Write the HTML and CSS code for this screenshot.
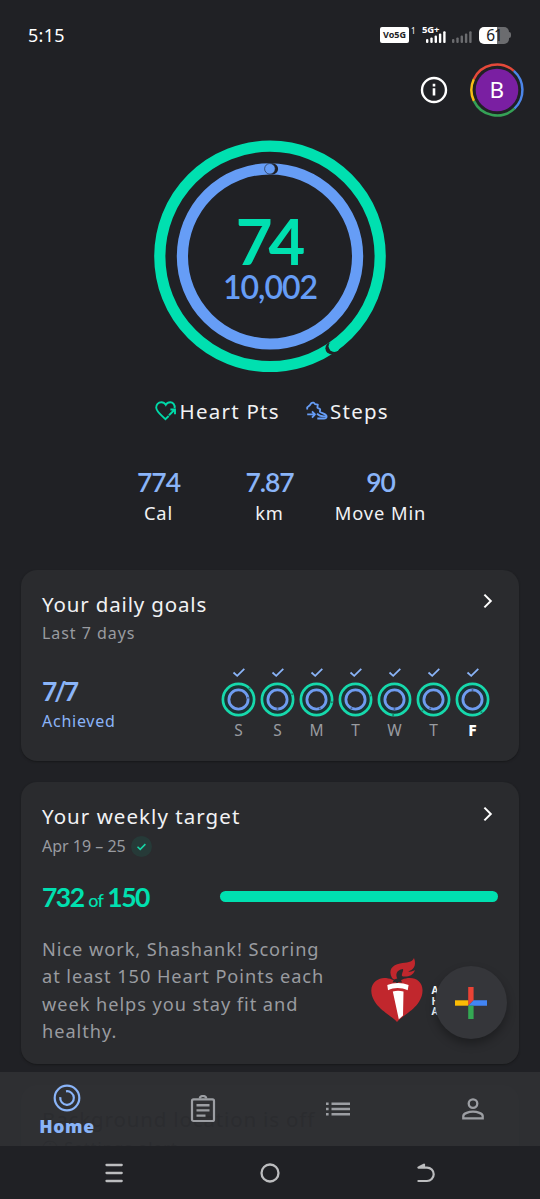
FILE: index.html
```html
<!DOCTYPE html>
<html lang="en">
<head>
<meta charset="utf-8">
<title>Fit</title>
<link rel="stylesheet" href="styles.css">
</head>
<body>
<div class="screen">
  <header class="status">
    <span class="clock">5:15</span>
    <div class="status-icons">
      <span class="volte">Vo5G</span><span class="sim">1</span>
      <div class="net"><span class="net-label">5G+</span>
        <svg width="20" height="12" viewBox="0 0 20 12" fill="#fff"><rect x="0" y="8" width="2.4" height="4" rx="1"/><rect x="4.3" y="6.5" width="2.4" height="5.5" rx="1"/><rect x="8.6" y="4.5" width="2.4" height="7.5" rx="1"/><rect x="12.9" y="2.5" width="2.4" height="9.5" rx="1"/><rect x="17.2" y="0.3" width="2.4" height="11.7" rx="1"/></svg>
      </div>
      <svg class="sig2" width="20" height="12" viewBox="0 0 20 12" fill="#6b6c6f"><rect x="0" y="8" width="2.4" height="4" rx="1"/><rect x="4.3" y="6.5" width="2.4" height="5.5" rx="1"/><rect x="8.6" y="4.5" width="2.4" height="7.5" rx="1"/><rect x="12.9" y="2.5" width="2.4" height="9.5" rx="1"/><rect x="17.2" y="0.3" width="2.4" height="11.7" rx="1"/></svg>
      <div class="battery"><span>61</span></div><i class="battery-tip"></i>
    </div>
  </header>

  <div class="topbar">
    <svg width="28" height="28" viewBox="0 0 28 28"><circle cx="14" cy="14" r="12" fill="none" stroke="#fff" stroke-width="2.4"/><path d="M14 12.3v7.2M14 7.8v2.6" stroke="#fff" stroke-width="2.6"/></svg>
    <svg class="avatar" width="54" height="54" viewBox="0 0 54 54">
      <g fill="none" stroke-width="2.5">
        <path d="M3.8 16.2A25.5 25.5 0 0 1 43.8 7.9" stroke="#e5493a"/>
        <path d="M43.8 7.9A25.5 25.5 0 0 1 44.4 45.6" stroke="#4c86ea"/>
        <path d="M44.4 45.6A25.5 25.5 0 0 1 3.9 37.9" stroke="#35a156"/>
        <path d="M3.9 37.9A25.5 25.5 0 0 1 3.8 16.2" stroke="#f9bc15"/>
      </g>
      <circle cx="27" cy="27" r="21.3" fill="#7a1fa2"/>
      <text x="26.7" y="35" text-anchor="middle" class="initial">B</text>
    </svg>
  </div>

  <section class="dial">
    <svg class="dial-rings" width="232" height="232" viewBox="0 0 232 232">
      <circle cx="116" cy="116.4" r="110.2" fill="none" stroke="#00e0b0" stroke-width="11.2"/>
      <circle cx="177.5" cy="208.3" r="6.1" fill="#202125"/>
      <circle cx="180.3" cy="206.3" r="5.7" fill="#00e0b0"/>
      <circle cx="116" cy="116.4" r="87.6" fill="none" stroke="#669df6" stroke-width="11.2"/>
      <circle cx="118.5" cy="28.9" r="5.6" fill="#202125"/>
      <circle cx="115.9" cy="28.8" r="5.3" fill="#669df6" stroke="#202125" stroke-width=".6"/>
    </svg>
    <div class="dial-text"><span class="points">74</span><span class="steps">10,002</span></div>
  </section>

  <div class="legend">
    <svg width="22" height="20" viewBox="0 0 22 20" fill="none" stroke="#00d9a8" stroke-width="1.9"><path d="M19.6 7.2C20.2 3.7 17.8 1.2 15.3 1.2C13.3 1.2 11.7 2.2 10.8 3.8C9.8 2.2 8.3 1.2 6.3 1.2C3.3 1.2 1 3.6 1.2 6.7C1.5 10.7 5.6 13.4 10.4 18.2L13.7 15"/><path d="M14 14.2L19.6 8.8M15.4 8.5H20V13.3"/></svg>
    <span class="legend-heart">Heart Pts</span>
    <svg width="22" height="20" viewBox="0 0 22 20" fill="none" stroke="#669df6" stroke-width="1.8" stroke-linejoin="round"><path d="M1.2 8.4V6.4L3.8 4.3L5.2 2.2C6.7 1 8.3 1.8 9 3.2L11.8 3.6L11.4 6.6L14.2 8.2L13.9 10.8C16.3 12.6 20.5 12.8 20.6 15.3C20.7 16.8 19.5 17.5 18 17.5H11.3"/><path d="M1.2 13.4H8.6M6 10.4L9 13.4L6 16.6M11 12.7C13 14.8 16 15.7 20 15.1"/></svg>
    <span class="legend-steps">Steps</span>
  </div>

  <div class="stats">
    <div class="stat"><b>774</b><span>Cal</span></div>
    <div class="stat"><b>7.87</b><span>km</span></div>
    <div class="stat"><b>90</b><span>Move Min</span></div>
  </div>

  <section class="card goals">
    <div class="card-head"><h2>Your daily goals</h2><svg width="10" height="16" viewBox="0 0 10 16"><path d="M1.4 1.6L7.8 8L1.4 14.4" fill="none" stroke="#fff" stroke-width="2"/></svg></div>
    <p class="sub">Last 7 days</p>
    <div class="goals-row">
      <div class="achieved"><b>7/7</b><span>Achieved</span></div>
      <div class="days" id="days"></div>
    </div>
  </section>

  <section class="card weekly">
    <div class="card-head"><h2 class="wide">Your weekly target</h2><svg width="10" height="16" viewBox="0 0 10 16"><path d="M1.4 1.6L7.8 8L1.4 14.4" fill="none" stroke="#fff" stroke-width="2"/></svg></div>
    <p class="sub range">Apr 19 – 25 <svg width="21" height="21" viewBox="0 0 21 21"><circle cx="10.5" cy="10.5" r="10.5" fill="#263a38"/><path d="M6.5 10.8L9.2 13.4L14.4 8.1" fill="none" stroke="#17d6a6" stroke-width="1.5"/></svg></p>
    <div class="target-row"><div class="target"><b>732</b><span>of</span><b>150</b></div><div class="bar"></div></div>
    <div class="note">
      <p>Nice work, Shashank! Scoring<br>at least 150 Heart Points each<br>week helps you stay fit and<br>healthy.</p>
      <svg width="52" height="66" viewBox="0 0 52 66"><path d="M26 64C20 57 1 49 .3 33C0 24 8 20 13 20C19 20 24 22 26 26C29 22 33 20 39 20C46 20 52 25 51.5 33C51 49 32 57 26 64Z" fill="#c1272d"/><path d="M21 20C17 12 21 7 29 5.5C36 4 41 5 43 0C46 8 42 12 37 13.5C40 14 43 13 44 12C42 18 37 19 32 18.5C29 18 33 13 32 11C25 12 24 17 27 22C25 22 23 22 21 20Z" fill="#c1272d"/><path d="M16.3 27C23 24.3 31 24.3 37.6 27L36.7 32.3C30 29.3 23 29.3 17 32.3ZM21.8 33.5Q27 32 32.5 33.5L32 57.5L27.8 61.3Z" fill="#fff"/><path d="M21.5 24.5Q23 20.5 27 20.5Q30 20.5 31 24.5Q26 23.5 21.5 24.5Z" fill="#2a2b2e"/></svg>
      <div class="org">A<br>H<br>A</div>
    </div>
  </section>

  <section class="card notice">
    <h2>Background location is off</h2>
    <p>ⓘ Settings alert</p>
  </section>

  <div class="fab"><svg width="32" height="32" viewBox="0 0 32 32"><path d="M13.2 0h5.4v13.3l-5.4 5.4z" fill="#ea4335"/><path d="M0 13.3h13.2v5.4H0z" fill="#fbbc04"/><path d="M18.6 13.3H32v5.4H13.2z" fill="#4285f4"/><path d="M13.2 18.7h5.4V32h-5.4z" fill="#34a853"/></svg></div>

  <footer class="bottom">
    <nav class="tabs">
      <div class="tab home"><svg width="28" height="28" viewBox="0 0 28 28" fill="none" stroke="#8ab4f8"><circle cx="14" cy="14" r="12.3" stroke-width="2.2"/><path d="M13 7.3A6.8 6.8 0 1 1 7.3 13.1" stroke-width="2.2"/></svg><span>Home</span></div>
      <div class="tab"><svg width="26" height="28" viewBox="0 0 26 28" fill="none" stroke="#9c9ea3" stroke-width="2.2"><rect x="2" y="4.4" width="22" height="21.6" rx="1.5"/><path d="M9.8 3.6A3.2 2.6 0 0 1 16.2 3.6"/><path d="M6.5 10.2h13M6.5 15.4h13M6.5 20.6h9" stroke-width="2.4"/></svg></div>
      <div class="tab"><svg width="26" height="16" viewBox="0 0 26 16" stroke="#9c9ea3" stroke-width="2.6"><path d="M1 2.7h2.6M1 8h2.6M1 13.3h2.6M6.5 2.7H25M6.5 8H25M6.5 13.3H25"/></svg></div>
      <div class="tab"><svg width="22" height="22" viewBox="0 0 22 22" fill="none" stroke="#9c9ea3" stroke-width="2.3"><circle cx="11" cy="5.6" r="4.3"/><path d="M1.3 20.4V18C1.3 15.3 7 13.7 11 13.7S20.7 15.3 20.7 18V20.4Z"/></svg></div>
    </nav>
    <div class="system">
      <svg width="18" height="20" viewBox="0 0 18 20" stroke="#bcbdbf" stroke-width="2.3" stroke-linecap="round"><path d="M1.5 2h15.2M1.5 10h15.2M1.5 18h15.2"/></svg>
      <svg width="20" height="20" viewBox="0 0 20 20"><circle cx="10" cy="10" r="8.5" fill="none" stroke="#bcbdbf" stroke-width="2.3"/></svg>
      <svg width="18" height="20" viewBox="0 0 18 20" fill="none" stroke="#bcbdbf" stroke-width="2.2" stroke-linecap="round" stroke-linejoin="round"><path d="M1.4 4.6H10A6.7 6.7 0 0 1 10 18H1.4M2 4.3L7 1.6V4"/></svg>
    </div>
  </footer>
</div>
<script src="days.js"></script>
</body>
</html>
```
FILE: styles.css
```css
* { box-sizing: border-box; }
body { margin: 0; background: #202125; color: #f1f2f4; font-family: "Noto Sans", sans-serif; }
h2, p { margin: 0; font-weight: 400; }
svg { display: block; flex: none; }
.screen { position: relative; width: 540px; height: 1199px; overflow: hidden; }

.status { height: 60px; padding: 10px 29px 0 28px; display: flex; align-items: center; justify-content: space-between; }
.clock { font-size: 18px; letter-spacing: .3px; color: #fff; }
.status-icons { display: flex; align-items: center; color: #fff; height: 24px; }
.volte { width: 29px; height: 16px; border-radius: 2px; background: #fff; color: #202125; font: 700 9px/16px "Noto Sans", sans-serif; text-align: center; }
.sim { font-size: 8px; line-height: 8px; margin: -9px 6px 0 2px; width: 5px; }
.net { position: relative; width: 26px; height: 18px; padding: 5px 0 0 4px; }
.net-label { position: absolute; left: 0; top: -1px; font: 700 9.5px/10px "Noto Sans", sans-serif; letter-spacing: -.2px; }
.sig2 { margin: 4px 7px 0 4px; }
.battery { width: 30px; height: 17px; border-radius: 5px; background: linear-gradient(90deg, #fff 61%, #6b6c6f 61%); color: #202125; font: 15.5px/17px "Noto Sans", sans-serif; text-align: center; letter-spacing: -1px; }
.battery-tip { width: 2px; height: 6px; border-radius: 0 2px 2px 0; background: #6b6c6f; }

.topbar { height: 60px; padding: 3px 16px 3px 0; display: flex; align-items: center; justify-content: flex-end; gap: 22px; }
.initial { font: 22.5px "Noto Sans", sans-serif; fill: #fff; }

.dial { display: grid; justify-content: center; padding-top: 20px; height: 271px; }
.dial-rings, .dial-text { grid-area: 1 / 1; }
.dial-text { display: flex; flex-direction: column; align-items: center; padding-top: 68.5px; font-family: Lato, sans-serif; }
.points { margin-left: -3px; font-size: 63.5px; line-height: 64px; font-weight: 700; letter-spacing: -4px; color: #00e0b0; }
.steps { font-size: 32px; line-height: 27px; font-weight: 600; letter-spacing: -1px; color: #669df6; }

.legend { height: 40px; display: flex; align-items: center; padding-left: 155px; font-size: 20.5px; letter-spacing: 1.25px; }
.legend-heart { width: 126px; margin-left: 2.5px; }
.legend-steps { margin-left: 2.5px; }
.stats { display: grid; grid-template-columns: 111px 111px 111px; padding: 34.5px 0 0 103px; height: 138.5px; }
.stat { display: flex; flex-direction: column; align-items: center; }
.stat b { font: 600 26.5px/32px Lato, sans-serif; letter-spacing: -1.1px; color: #8ab4f8; }
.stat span { font-size: 18.3px; line-height: 29px; letter-spacing: .9px; white-space: nowrap; }

.card { width: 497.5px; margin: 0 0 21px 21px; border-radius: 16px; background: #2a2b2e; box-shadow: 0 1px 2px #17181a; padding: 0 21px; }
.goals { height: 191.5px; }
.card-head { display: flex; justify-content: space-between; height: 50px; padding: 20px 5px 0 0; }
.card-head svg { margin-top: 3.5px; }
.card h2 { font-size: 20.5px; line-height: 28px; letter-spacing: .85px; }
.card h2.wide { letter-spacing: 1.05px; }
.sub { font-size: 16px; line-height: 27px; height: 28px; letter-spacing: .95px; color: #999ba0; }
.goals-row { display: flex; justify-content: space-between; }
.achieved { display: flex; flex-direction: column; padding-top: 27px; color: #8ab4f8; }
.achieved b { font: 700 26.5px/33px Lato, sans-serif; letter-spacing: -3px; }
.achieved span { font-size: 16px; line-height: 26px; letter-spacing: .75px; }
.days { display: flex; margin-right: 5.5px; padding-top: 20px; }
.day { width: 39px; display: flex; flex-direction: column; align-items: center; font-size: 15.5px; line-height: 20px; color: #999ba0; }
.day.today { color: #fff; font-weight: 800; }
.mini-rings { margin: 4px 0 3px; }

.weekly { height: 281.5px; }
.range { display: flex; align-items: center; gap: 5px; letter-spacing: 0; }
.target-row { display: flex; align-items: center; justify-content: space-between; height: 34px; margin-top: 19.5px; }
.target { display: flex; align-items: baseline; color: #00e0b0; font-family: Lato, sans-serif; letter-spacing: -1.5px; }
.target b { font-size: 26.5px; font-weight: 700; }
.target span { font-size: 18px; font-weight: 500; letter-spacing: -.6px; margin: 0 4px 0 4.5px; }
.bar { width: 278px; height: 11px; border-radius: 6px; background: #00e0b0; }
.note { display: flex; margin-top: 22.5px; color: #999ba0; font-size: 18.2px; letter-spacing: .95px; line-height: 27.4px; white-space: nowrap; }
.note p { width: 328.5px; }
.note svg { margin-top: 21.5px; }
.org { margin: 49px 0 0 9px; width: 9px; height: 32px; color: #fff; font: 700 10px/10.5px "Noto Sans", sans-serif; letter-spacing: 0; }
.notice { height: 120px; padding-top: 19px; color: #000; }
.notice h2 { line-height: 30px; }
.notice p { font-size: 16px; line-height: 28px; letter-spacing: 1px; }

.fab { position: absolute; left: 435px; top: 966px; width: 72px; height: 73px; border-radius: 50%; background: #35363a; box-shadow: 0 5px 10px rgba(0,0,0,.3); display: flex; align-items: center; justify-content: center; }
.bottom { position: absolute; left: 0; right: 0; bottom: 0; }
.tabs { height: 74px; background: rgba(48,49,52,.9); display: grid; grid-template-columns: repeat(4, 1fr); }
.tab { display: flex; flex-direction: column; align-items: center; justify-content: center; }
.home { justify-content: flex-start; padding: 12px 1px 0 0; }
.home span { font-size: 17.5px; line-height: 28px; font-weight: 900; letter-spacing: .6px; color: #8ab4f8; }
.system { height: 53px; background: #202125; display: grid; grid-template-columns: 156px 156px 156px; justify-content: center; justify-items: center; align-items: center; }
```
FILE: days.js
```javascript
// End angle of each day's outer and inner ring, in degrees clockwise from the top.
const days = [
  ["S", 45, 80], ["S", 70, 180], ["M", 100, 160], ["T", 75, 205],
  ["W", 185, 180], ["T", 225, 200], ["F", 145, 0]
];

function notch(angle, radius) {
  const a = (angle - 90) * Math.PI / 180;
  return `<circle cx="${17.5 + radius * Math.cos(a)}" cy="${17.5 + radius * Math.sin(a)}" r="1" fill="#202125" opacity=".5"/>`;
}

document.getElementById("days").innerHTML = days.map(([name, outer, inner], i) => `
  <div class="day${i === 6 ? " today" : ""}">
    <svg width="14" height="10" viewBox="0 0 14 10"><path d="M1.5 4.5L5.2 7.8L12.3 .9" fill="none" stroke="#8ab4f8" stroke-width="1.8"/></svg>
    <svg class="mini-rings" width="35" height="35" viewBox="0 0 35 35">
      <circle cx="17.5" cy="17.5" r="12.5" fill="none" stroke="#183534" stroke-width="3"/>
      <circle cx="17.5" cy="17.5" r="15.6" fill="none" stroke="#16d9ac" stroke-width="2.7"/>
      <circle cx="17.5" cy="17.5" r="9.6" fill="none" stroke="#6f9cf0" stroke-width="2.8"/>
      ${notch(outer, 15.6)}${notch(inner, 9.6)}
    </svg>
    ${name}
  </div>`).join("");
```
